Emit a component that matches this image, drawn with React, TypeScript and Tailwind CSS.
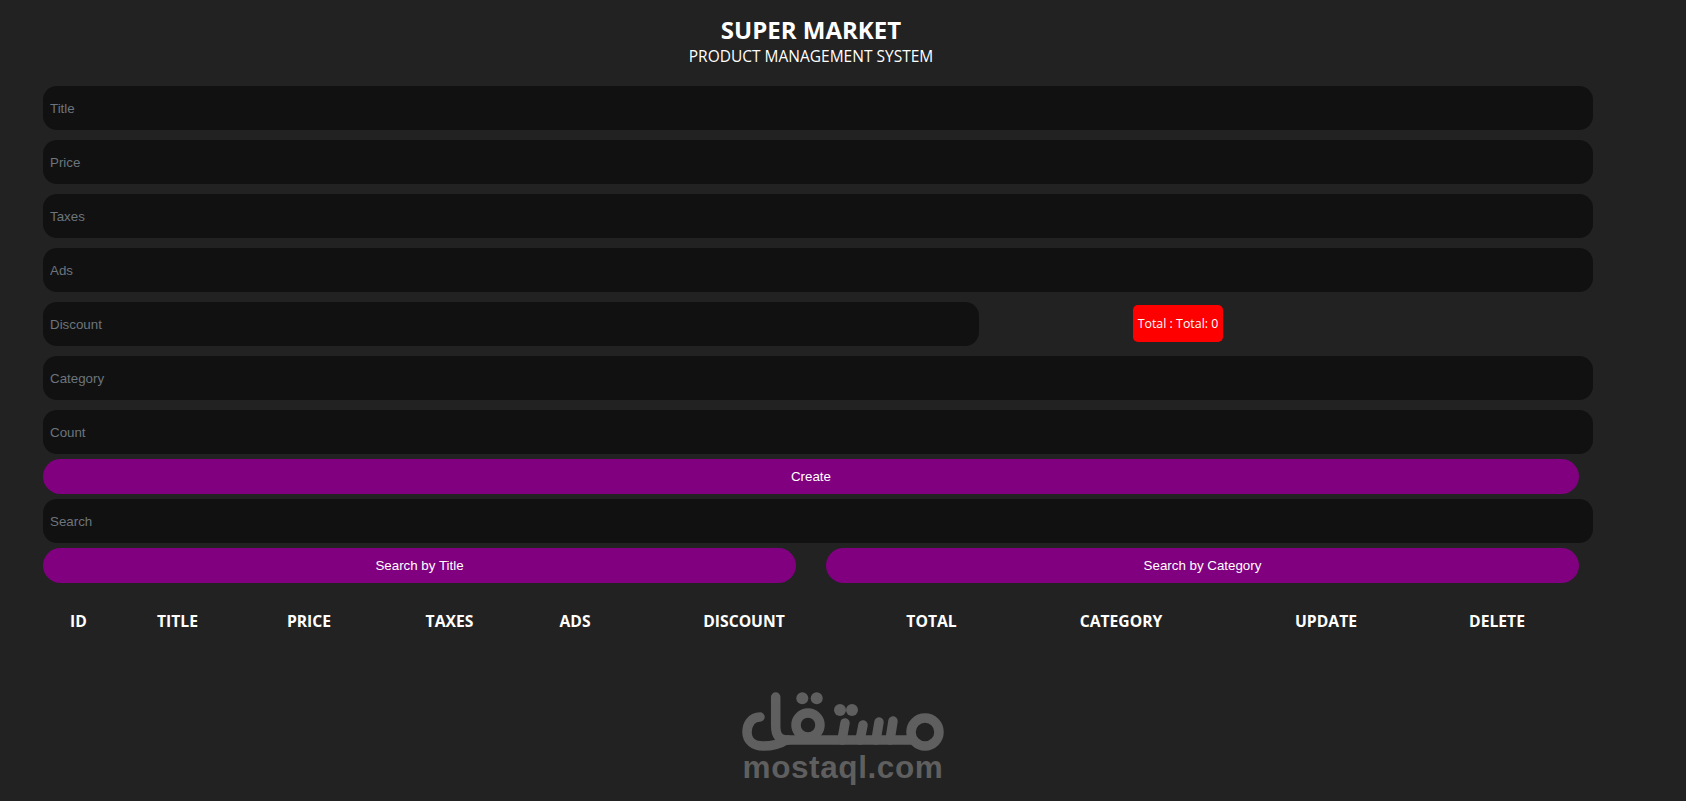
import React from 'react';

const fields = ['Title', 'Price', 'Taxes', 'Ads'];
const headers = [
  { label: 'ID', w: 'w-[71px]' },
  { label: 'TITLE', w: 'w-[127px]' },
  { label: 'PRICE', w: 'w-[136px]' },
  { label: 'TAXES', w: 'w-[145px]' },
  { label: 'ADS', w: 'w-[106px]' },
  { label: 'DISCOUNT', w: 'w-[232px]' },
  { label: 'TOTAL', w: 'w-[143px]' },
  { label: 'CATEGORY', w: 'w-[236px]' },
  { label: 'UPDATE', w: 'w-[174px]' },
  { label: 'DELETE', w: 'w-[168px]' },
];

const inputCls =
  "h-[44px] rounded-[14px] bg-[#111111] px-[7px] text-[13.33px] text-white outline-none font-['Liberation_Sans',sans-serif] placeholder:text-[#6c757d]";
const buttonCls =
  "h-[35px] rounded-[20px] bg-[#800080] text-[13.33px] text-white font-['Liberation_Sans',sans-serif]";

function MostaqlLogo() {
  return (
    <div className="ml-[657px] w-[286px]">
      <svg width="280" height="84" viewBox="700 670 280 84" fill="none" stroke="#5f5f5f" strokeWidth="9.5" strokeLinecap="round" strokeLinejoin="round">
        <path d="M760 717 C751 717 747 725 747 732 C747 741 754 746 763 746 C772 746 780 744 786 740 L912 740" />
        <path d="M775.7 697 L775.7 726 C775.7 734 778 740 788 740" />
        <circle cx="808" cy="725" r="12" />
        <path d="M845 723 L842 740" />
        <path d="M863 725 L860 740" />
        <path d="M879 722 L876 740" />
        <path d="M893 721 L890 740" />
        <circle cx="925" cy="732" r="14" />
        <g fill="#5f5f5f" stroke="none">
          <circle cx="802.3" cy="698.3" r="6" />
          <circle cx="816.7" cy="698.3" r="6" />
          <circle cx="840" cy="710" r="6" />
          <circle cx="852" cy="710" r="6" />
        </g>
      </svg>
      <div className="-mt-[2px] text-center text-[31.5px] leading-[30px] font-bold tracking-[0.6px] text-[#5f5f5f] font-['Liberation_Sans',sans-serif]">
        mostaql.com
      </div>
    </div>
  );
}

export default function App() {
  return (
    <div className="h-[801px] overflow-hidden bg-[#222222] pl-[43px] text-white">
      <div className="w-[1536px] pt-[14px] text-center font-['Open_Sans',sans-serif]">
        <h2 className="text-[24px] leading-[32px] font-bold">SUPER MARKET</h2>
        <p className="text-[15.5px] leading-[20px]">PRODUCT MANAGEMENT SYSTEM</p>
      </div>
      <div className="mt-[20px] flex w-[1550px] flex-col gap-[10px]">
        {fields.map((f) => (
          <input key={f} placeholder={f} className={inputCls} />
        ))}
        <div className="flex items-center">
          <input placeholder="Discount" className={`${inputCls} w-[936px]`} />
          <div className="mb-[1px] ml-[154px] flex h-[37px] w-[90px] items-center justify-center rounded-[5px] bg-[#ff0000] pt-[2px] text-[12.4px] font-['Open_Sans',sans-serif]">
            Total : Total: 0
          </div>
        </div>
        <input placeholder="Category" className={inputCls} />
        <input placeholder="Count" className={inputCls} />
      </div>
      <button className={`${buttonCls} mt-[5px] block w-[1536px]`}>Create</button>
      <input placeholder="Search" className={`${inputCls} mt-[5px] block w-[1550px]`} />
      <div className="mt-[5px] flex w-[1536px] gap-[30px]">
        <button className={`${buttonCls} flex-1`}>Search by Title</button>
        <button className={`${buttonCls} flex-1`}>Search by Category</button>
      </div>
      <div className="mt-[26px] flex text-[15.7px] leading-[24px] font-bold font-['Open_Sans',sans-serif]">
        {headers.map((h) => (
          <div key={h.label} className={`${h.w} text-center`}>
            {h.label}
          </div>
        ))}
      </div>
      <div className="mt-[37px]">
        <MostaqlLogo />
      </div>
    </div>
  );
}
